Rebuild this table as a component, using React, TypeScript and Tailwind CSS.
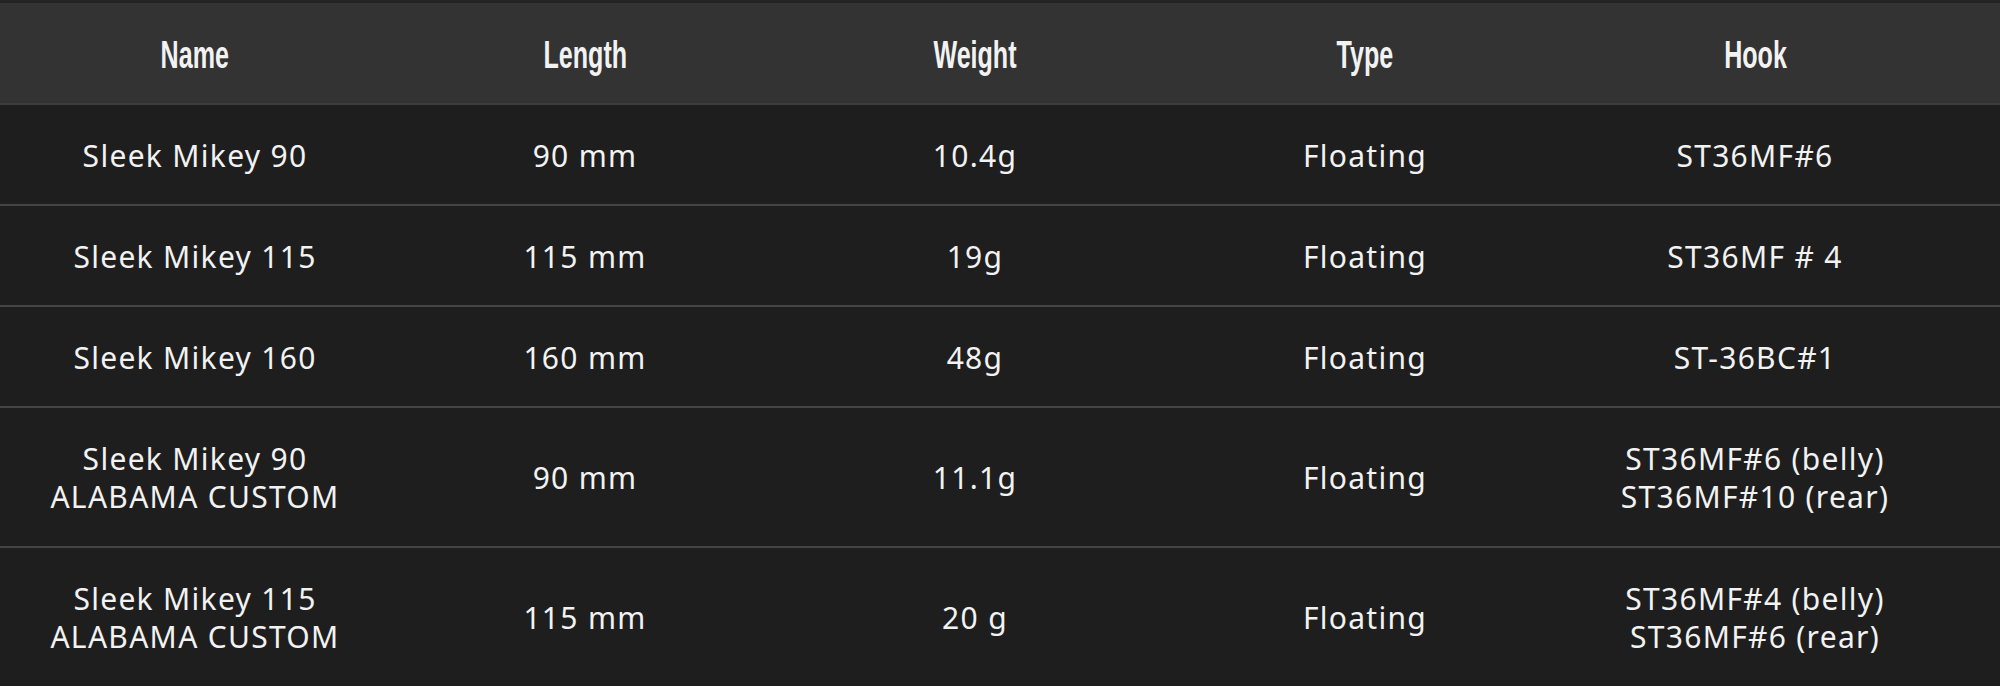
const headers = ["Name", "Length", "Weight", "Type", "Hook"];

const rows: string[][][] = [
  [["Sleek Mikey 90"], ["90 mm"], ["10.4g"], ["Floating"], ["ST36MF#6"]],
  [["Sleek Mikey 115"], ["115 mm"], ["19g"], ["Floating"], ["ST36MF # 4"]],
  [["Sleek Mikey 160"], ["160 mm"], ["48g"], ["Floating"], ["ST-36BC#1"]],
  [
    ["Sleek Mikey 90", "ALABAMA CUSTOM"],
    ["90 mm"],
    ["11.1g"],
    ["Floating"],
    ["ST36MF#6 (belly)", "ST36MF#10 (rear)"],
  ],
  [
    ["Sleek Mikey 115", "ALABAMA CUSTOM"],
    ["115 mm"],
    ["20 g"],
    ["Floating"],
    ["ST36MF#4 (belly)", "ST36MF#6 (rear)"],
  ],
];

export default function App() {
  return (
    <div className="w-[2000px] h-[686px] overflow-hidden bg-[#1e1e1e] text-[#f2f2f2]">
      {/* header */}
      <div className="h-[105px] pt-[4px] bg-[#333333] border-t-[3px] border-t-[#242424] border-b-2 border-b-[#3d3d3d] grid grid-cols-[repeat(5,390px)] items-center">
        {headers.map((h) => (
          <div key={h} className="text-center">
            <span className="inline-block scale-x-[0.66] text-[38px] leading-[40px] font-bold font-['Liberation_Sans',Arial,sans-serif]">
              {h}
            </span>
          </div>
        ))}
      </div>

      {/* body rows */}
      {rows.map((row, i) => (
        <div
          key={i}
          className={`grid grid-cols-[repeat(5,390px)] items-center border-b-2 border-b-[#454545] ${
            row[0].length > 1 ? "h-[140px]" : "h-[101px]"
          }`}
        >
          {row.map((cell, j) => (
            <div
              key={j}
              className="text-center pt-[2px] text-[30px] leading-[38px] tracking-[1.3px] font-['Noto_Sans','Open_Sans',sans-serif]"
            >
              {cell.map((line) => (
                <div key={line}>{line}</div>
              ))}
            </div>
          ))}
        </div>
      ))}
    </div>
  );
}
